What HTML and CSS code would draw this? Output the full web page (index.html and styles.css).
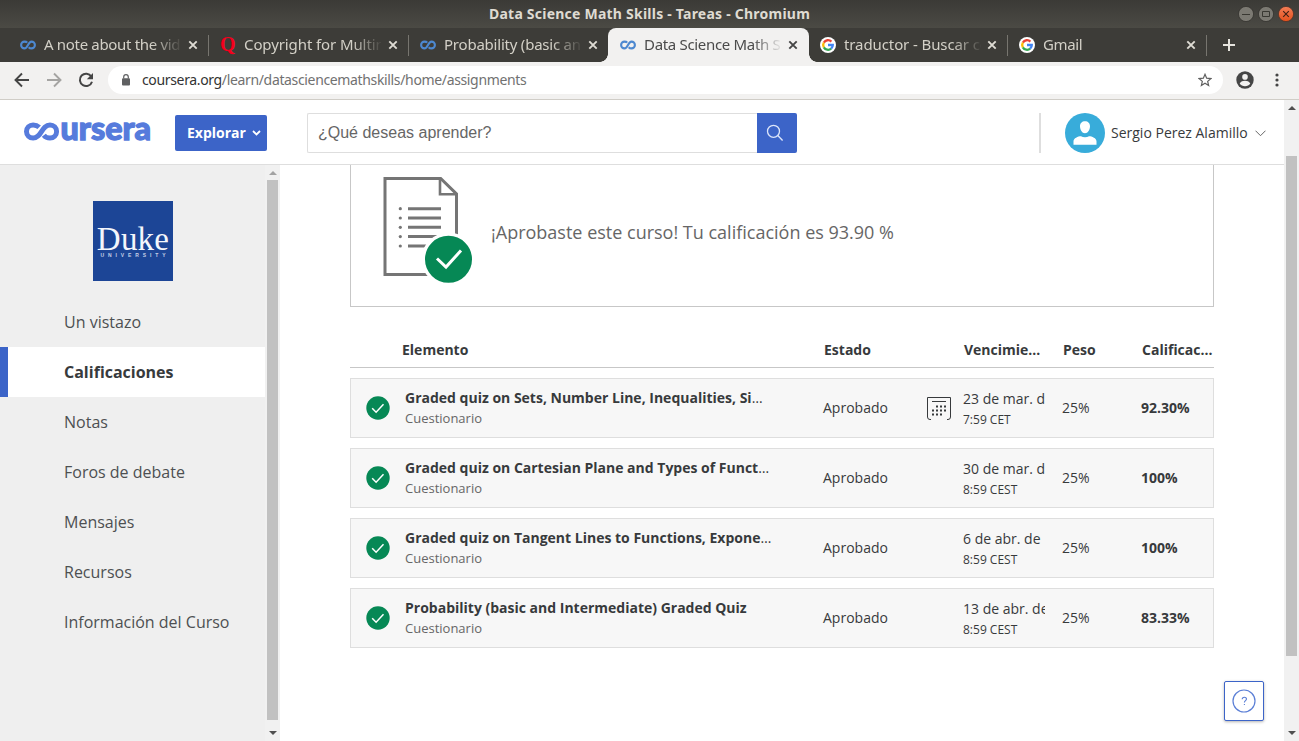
FILE: index.html
```html
<!DOCTYPE html>
<html lang="es">
<head>
<meta charset="utf-8">
<title>Data Science Math Skills - Tareas</title>
<link rel="stylesheet" href="styles.css">
</head>
<body>
<svg class="defs" aria-hidden="true">
  <symbol id="infinity" viewBox="0 0 16 16"><path d="M7.200 5.700C6.400 4.700 5.700 4.600 4.500 4.600a3.200 3.200 0 0 0 0 6.800C8 11.400 8 4.600 11.500 4.600a3.200 3.200 0 0 1 0 6.800C10.300 11.400 9.600 11.200 8.700 10.200" fill="none" stroke="#4d88d0" stroke-width="2.100"/></symbol>
  <symbol id="close" viewBox="0 0 10 10"><path d="M1.300 1.300l7.400 7.400M8.700 1.300L1.300 8.700" fill="none" stroke="currentColor" stroke-width="1.900"/></symbol>
  <symbol id="google" viewBox="0 0 16 16"><circle cx="8" cy="8" r="8" fill="#fff"/><g fill="none" stroke-width="2.300"><path d="M11.400 4.600A4.800 4.800 0 0 0 3.850 5.600" stroke="#ea4335"/><path d="M3.850 5.600a4.800 4.800 0 0 0 0 4.800" stroke="#fbbc05"/><path d="M3.850 10.400a4.800 4.800 0 0 0 7.300 1.200" stroke="#34a853"/><path d="M11.150 11.600A4.800 4.800 0 0 0 12.800 8H8" stroke="#4285f4"/></g></symbol>
  <symbol id="check" viewBox="0 0 24 24"><circle cx="12" cy="12" r="11.700" fill="#068855"/><path d="M6.200 12.200l3.900 4 7.400-8" fill="none" stroke="#fff" stroke-width="1.500"/></symbol>
</svg>

<div class="titlebar">
  <span class="window-title">Data Science Math Skills - Tareas - Chromium</span>
  <div class="window-buttons">
    <svg width="16" height="16" viewBox="0 0 16 16"><circle cx="8" cy="8" r="7.600" fill="#7b7972" stroke="#33322e" stroke-width=".8"/><path d="M4 8.500h8" stroke="#393832"/></svg>
    <svg width="16" height="16" viewBox="0 0 16 16"><circle cx="8" cy="8" r="7.600" fill="#7b7972" stroke="#33322e" stroke-width=".8"/><path d="M4.500 5.500h7v5h-7z" fill="none" stroke="#393832"/></svg>
    <svg width="16" height="16" viewBox="0 0 16 16"><defs><linearGradient id="orange" x2="0" y2="1"><stop stop-color="#f37e57"/><stop offset="1" stop-color="#e2501c"/></linearGradient></defs><circle cx="8" cy="8" r="7.600" fill="url(#orange)" stroke="#4d3229" stroke-width=".8"/><path d="M5.200 5.200l5.600 5.600m0-5.600l-5.600 5.600" stroke="#3e2015" stroke-width="1.100"/></svg>
  </div>
</div>

<div class="tabs">
  <div class="tab"><svg class="favicon"><use href="#infinity"/></svg><span class="tab-text t1">A note about the vid</span><svg class="close"><use href="#close"/></svg></div>
  <div class="tab"><span class="favicon quora">Q</span><span class="tab-text t2">Copyright for Multin</span><svg class="close"><use href="#close"/></svg></div>
  <div class="tab before-active"><svg class="favicon"><use href="#infinity"/></svg><span class="tab-text t3">Probability (basic an</span><svg class="close"><use href="#close"/></svg></div>
  <div class="tab active"><svg class="favicon"><use href="#infinity"/></svg><span class="tab-text t4">Data Science Math S</span><svg class="close"><use href="#close"/></svg></div>
  <div class="tab narrow"><svg class="favicon"><use href="#google"/></svg><span class="tab-text t5">traductor - Buscar co</span><svg class="close"><use href="#close"/></svg></div>
  <div class="tab narrow"><svg class="favicon"><use href="#google"/></svg><span class="tab-text t6">Gmail</span><svg class="close"><use href="#close"/></svg></div>
  <svg class="new-tab" viewBox="0 0 12 12"><path d="M6 0v12M0 6h12" stroke="#e6e4de" stroke-width="2"/></svg>
</div>

<div class="toolbar">
  <svg class="nav-icon" viewBox="0 0 16 16"><path d="M15 8H2M8 1.500L1.500 8 8 14.500" fill="none" stroke="#454545" stroke-width="1.900"/></svg>
  <svg class="nav-icon" viewBox="0 0 16 16"><path d="M1 8h13M8 1.500L14.500 8 8 14.500" fill="none" stroke="#a5a4a2" stroke-width="1.900"/></svg>
  <svg class="nav-icon" viewBox="0 0 16 16"><path d="M13.300 4.500A6.200 6.200 0 1 0 14 9.700" fill="none" stroke="#454545" stroke-width="2"/><path d="M15 1v6.300H8.800z" fill="#454545"/></svg>
  <div class="address">
    <svg class="lock" viewBox="0 0 10 12"><rect x="1" y="4.200" width="8" height="7.300" rx="1" fill="#5f6062"/><path d="M2.700 4.500V3a2.300 2.300 0 0 1 4.600 0v1.500" fill="none" stroke="#5f6062" stroke-width="1.200"/></svg>
    <span class="url"><b>coursera.org</b>/learn/datasciencemathskills/home/assignments</span>
    <svg class="star" viewBox="0 0 14 14"><path d="M7 1.300l1.650 3.900 4.250.36-3.220 2.800.96 4.130L7 10.300l-3.640 2.190.96-4.130L1.100 5.560l4.250-.36z" fill="none" stroke="#606060" stroke-width="1.200"/></svg>
  </div>
  <svg class="account" viewBox="0 0 18 18"><circle cx="9" cy="9" r="8.700" fill="#454545"/><circle cx="9" cy="5.900" r="2.800" fill="#f2f1f0"/><path d="M3.700 12.500c1-2 3.300-2.700 5.300-2.700s4.300.7 5.300 2.700C13.100 14.200 11.200 15.200 9 15.200s-4.100-1-5.300-2.700z" fill="#f2f1f0"/></svg>
  <svg class="kebab" viewBox="0 0 4 14"><g fill="#454545"><circle cx="2" cy="2" r="1.600"/><circle cx="2" cy="7" r="1.600"/><circle cx="2" cy="12" r="1.600"/></g></svg>
</div>

<div class="page">
  <div class="view">
    <header class="header">
      <svg class="logo" viewBox="0 0 128 22"><path d="M15.200 5.200C13.500 3.600 11.500 2.900 9.100 2.900a6.600 6.600 0 0 0 0 13.200C17.500 16.100 17.500 2.900 26 2.900a6.600 6.600 0 0 1 0 13.200c-2.700 0-4.700-.9-6.200-2.800" fill="none" stroke="#567bdc" stroke-width="5"/><text x="36.500" y="18.400" textLength="90.500" lengthAdjust="spacingAndGlyphs" class="logo-text">ursera</text></svg>
      <button class="explore">Explorar<svg viewBox="0 0 9 6"><path d="M1 1l3.500 3.500L8 1" fill="none" stroke="#fff" stroke-width="1.800"/></svg></button>
      <div class="search">
        <span class="search-input">¿Qué deseas aprender?</span>
        <span class="search-button"><svg viewBox="0 0 18 18"><circle cx="7.500" cy="7.300" r="6" fill="none" stroke="#dce5fa" stroke-width="1.300"/><path d="M11.800 11.600l4.800 4.800" stroke="#dce5fa" stroke-width="1.400"/></svg></span>
      </div>
      <div class="user">
        <svg class="avatar" viewBox="0 0 40 40"><circle cx="20" cy="20" r="20" fill="#38acda"/><path d="M20 8.300c3 0 5 2 5 5 0 3.500-2.100 7-5 7s-5-3.500-5-7c0-3 2-5 5-5zM8.500 31.700v-3.500c0-3 4.500-5 7.500-5 2.200 1.500 5.800 1.500 8 0 3 0 7.500 2 7.500 5v3.500z" fill="#fff"/></svg>
        <span class="user-name">Sergio Perez Alamillo</span>
        <svg class="user-caret" viewBox="0 0 11 7"><path d="M.5.700l5 5 5-5" fill="none" stroke="#666" stroke-width="1"/></svg>
      </div>
    </header>

    <div class="content">
      <aside class="sidebar">
        <div class="menu">
          <div class="duke"><span class="duke-name">Duke</span><span class="duke-sub">UNIVERSITY</span></div>
          <a class="item">Un vistazo</a>
          <a class="item current">Calificaciones</a>
          <a class="item">Notas</a>
          <a class="item">Foros de debate</a>
          <a class="item">Mensajes</a>
          <a class="item">Recursos</a>
          <a class="item">Información del Curso</a>
        </div>
        <div class="scrollbar side"><i class="up dim"></i><i class="thumb"></i><i class="down"></i></div>
      </aside>

      <main class="main">
        <section class="summary">
          <svg class="doc" viewBox="0 0 92 108"><g fill="none" stroke="#757575" stroke-width="3"><path d="M73.500 61V17L57.700 1.500H2v96h50"/><path d="M57 1.500v15.700h16.500" stroke-width="2.600"/><path d="M25 31.700h33M25 41h33M25 50.300h33M25 59.600h33M25 69h33"/></g><g fill="#757575"><circle cx="17.300" cy="31.700" r="1.600"/><circle cx="17.300" cy="41" r="1.600"/><circle cx="17.300" cy="50.300" r="1.600"/><circle cx="17.300" cy="59.600" r="1.600"/><circle cx="17.300" cy="69" r="1.600"/></g><circle cx="65.500" cy="82.300" r="25.200" fill="#068855" stroke="#fff" stroke-width="3.400"/><path d="M54 81.500l9 8.500 15-16.500" fill="none" stroke="#fff" stroke-width="3"/></svg>
          <p class="result">¡Aprobaste este curso! Tu calificación es 93.90 %</p>
        </section>
        <div class="row head"><span></span><span>Elemento</span><span>Estado</span><span></span><span>Vencimie...</span><span>Peso</span><span>Calificac...</span></div>
        <div class="row quiz">
          <svg class="ok"><use href="#check"/></svg><div class="name"><strong>Graded quiz on Sets, Number Line, Inequalities, Si<i>…</i></strong><small>Cuestionario</small></div><span class="value">Aprobado</span>
          <svg class="calendar" viewBox="0 0 24 24"><path d="M4 22.500H3A2.500 2.500 0 0 1 .500 20V.500h23V20a2.500 2.500 0 0 1-2.500 2.500h-1M5 4.500h14" fill="none" stroke="#373a3c"/><path d="M9 9.500h11M5 13.500h15M5 17.500h11" fill="none" stroke="#373a3c" stroke-width="2" stroke-dasharray="2 2"/></svg>
          <div class="due"><span>23 de mar. de</span><small>7:59 CET</small></div><span class="value">25%</span><b class="value">92.30%</b>
        </div>
        <div class="row quiz">
          <svg class="ok"><use href="#check"/></svg><div class="name"><strong>Graded quiz on Cartesian Plane and Types of Funct<i>…</i></strong><small>Cuestionario</small></div><span class="value">Aprobado</span><span></span>
          <div class="due"><span>30 de mar. de</span><small>8:59 CEST</small></div><span class="value">25%</span><b class="value">100%</b>
        </div>
        <div class="row quiz">
          <svg class="ok"><use href="#check"/></svg><div class="name"><strong>Graded quiz on Tangent Lines to Functions, Expone<i>…</i></strong><small>Cuestionario</small></div><span class="value">Aprobado</span><span></span>
          <div class="due"><span>6 de abr. de</span><small>8:59 CEST</small></div><span class="value">25%</span><b class="value">100%</b>
        </div>
        <div class="row quiz">
          <svg class="ok"><use href="#check"/></svg><div class="name"><strong>Probability (basic and Intermediate) Graded Quiz</strong><small>Cuestionario</small></div><span class="value">Aprobado</span><span></span>
          <div class="due"><span>13 de abr. de</span><small>8:59 CEST</small></div><span class="value">25%</span><b class="value">83.33%</b>
        </div>
        <button class="help"><svg viewBox="0 0 24 24"><circle cx="12" cy="12" r="11" fill="none" stroke="#5b7fd6" stroke-width="1.200"/><path d="M10.200 10.300c0-2.600 4.300-2.600 4.300-.3 0 1.600-2.100 1.700-2.100 3.500M12.400 14.900v1.200" fill="none" stroke="#5b7fd6" stroke-width="1.100"/></svg></button>
      </main>
    </div>
  </div>
  <div class="scrollbar outer"><i class="up"></i><i class="thumb"></i><i class="down"></i></div>
</div>
</body>
</html>
```
FILE: styles.css
```css
* { box-sizing: border-box; }
body { margin: 0; width: 1299px; height: 741px; overflow: hidden; display: flex; flex-direction: column; font-family: "Open Sans", "Noto Sans", sans-serif; font-size: 14px; color: #373a3c; background: #fff; }
svg { display: block; flex: none; }
.defs { position: absolute; width: 0; height: 0; }
i { font-style: normal; }

.titlebar { height: 28px; flex: none; display: grid; grid-template-columns: 1fr auto 1fr; align-items: center; background: linear-gradient(#3b3a36, #4b4a44); color: #dfdbd2; }
.window-title { grid-column: 2; font: 700 14px/28px "Noto Sans", sans-serif; letter-spacing: .23px; white-space: nowrap; }
.window-buttons { display: flex; gap: 4px; justify-content: flex-end; padding-right: 5px; }

.tabs { height: 34px; flex: none; display: flex; padding-left: 8px; background: #3d3c38; color: #d3d0c7; }
.tab { position: relative; width: 200px; padding: 0 10px 0 12px; display: flex; align-items: center; font: 15px/34px "Noto Sans", sans-serif; }
.tab.narrow { width: 199px; left: -1px; }
.tab::after { content: ""; position: absolute; right: -1px; top: 7px; width: 1px; height: 21px; background: #77756f; }
.tab.active { width: 201px; padding-right: 11px; background: #f2f1f0; color: #4b4b4b; border-radius: 8px 8px 0 0; }
.tab.active::before { content: ""; position: absolute; left: -8px; bottom: 0; width: 8px; height: 8px; background: radial-gradient(circle at 0 0, #3d3c38 7.500px, #f2f1f0 8px); }
.tab.active::after { right: -8px; top: auto; bottom: 0; width: 8px; height: 8px; background: radial-gradient(circle at 100% 0, #3d3c38 7.500px, #f2f1f0 8px); }
.before-active::after { display: none; }
.favicon { width: 16px; height: 16px; flex: none; }
.quora { font: 700 20px/14px "Liberation Serif", serif; color: #f5001d; }
.tab-text { width: 137px; flex: none; margin: -2px 7px 0 8px; overflow: hidden; white-space: nowrap; letter-spacing: -.32px; -webkit-mask-image: linear-gradient(90deg, #000 108px, transparent 139px); mask-image: linear-gradient(90deg, #000 108px, transparent 139px); }
.narrow .tab-text { margin-right: 6px; }
.t2, .t5 { letter-spacing: -.1px; }
.t3 { letter-spacing: -.22px; }
.t6 { letter-spacing: -.35px; }
.close { width: 10px; height: 10px; color: #dfdcd4; }
.new-tab { width: 12px; height: 12px; margin: 11px 0 0 16px; }
.active .close { color: #454545; }

.toolbar { height: 38px; flex: none; display: flex; align-items: center; background: #f2f1f0; border-bottom: 1px solid #d0cdc7; padding: 0 19px 1px 14px; }
.nav-icon { width: 16px; height: 16px; margin-right: 16px; }
.address { width: 1115px; flex: none; height: 28px; margin-left: -2px; padding: 0 11px 0 13px; display: flex; align-items: center; background: #fff; border-radius: 14px; }
.lock { width: 10px; height: 12px; margin-right: 11px; }
.url { flex: 1; font: 14px/28px "Noto Sans", sans-serif; letter-spacing: -.35px; color: #717171; }
.url b { font-weight: 400; color: #333; }
.star { width: 14px; height: 14px; }
.account { width: 18px; height: 18px; margin-left: 13px; }
.kebab { width: 4px; height: 14px; margin-left: 21px; }

.page { flex: 1; min-height: 0; display: flex; }
.view { width: 1284px; display: flex; flex-direction: column; }
.header { height: 65px; flex: none; display: flex; align-items: center; border-bottom: 1px solid #dedede; padding: 1px 18px 0 24px; }
.logo { width: 128px; height: 22px; overflow: visible; }
.logo-text { font: 900 33px Lato, sans-serif; fill: #567bdc; stroke: #567bdc; stroke-width: 1.300px; }
.explore { width: 92px; height: 36px; margin-left: 23px; padding: 0 0 0 12px; border: 0; border-radius: 2px; background: #3c64c8; color: #fff; display: flex; align-items: center; font: 700 14px "Open Sans", sans-serif; }
.explore svg { width: 9px; height: 6px; margin-left: 6px; }
.search { display: flex; margin-left: 40px; }
.search-input { width: 450px; height: 40px; border: 1px solid #dedede; border-right: 0; border-radius: 2px 0 0 2px; padding-left: 10px; font: 16px/37px "Liberation Sans", sans-serif; color: #666; }
.search-button { width: 40px; height: 40px; background: #3c64c8; border-radius: 0 2px 2px 0; padding: 11px 0 0 9px; }
.search-button svg { width: 18px; height: 18px; }
.user { margin-left: auto; height: 40px; border-left: 2px solid #dedede; padding-left: 24px; display: flex; align-items: center; }
.avatar { width: 40px; height: 40px; }
.user-name { margin-left: 6px; width: 137px; white-space: nowrap; }
.user-caret { width: 11px; height: 7px; margin: 1px 0 0 7px; }

.content { flex: 1; min-height: 0; display: flex; }
.sidebar { width: 280px; display: flex; background: #efefef; }
.menu { width: 265px; padding-top: 36px; }
.duke { width: 80px; height: 80px; margin: 0 auto 16px 93px; background: #1c4596; color: #f4f6fb; display: flex; flex-direction: column; align-items: center; padding-top: 26px; }
.duke-name { font: 33px/25px "Liberation Serif", serif; letter-spacing: .2px; }
.duke-sub { font: 700 5px/6px "Liberation Sans", sans-serif; letter-spacing: 3.900px; margin: 0 -4px 0 0; color: #c5d0e6; }
.item { display: block; height: 50px; padding-left: 64px; font-size: 16px; line-height: 50px; color: #4d5052; }
.item.current { background: #fff; border-left: 8px solid #3c64c8; padding-left: 56px; font-weight: 700; color: #373a3c; }

.scrollbar { width: 15px; flex: none; background: #f1f1f1; display: flex; flex-direction: column; align-items: center; }
.scrollbar .thumb { width: 11px; background: #c1c1c1; }
.up { border: 4px solid transparent; border-top: 0; border-bottom: 4px solid #505050; }
.up.dim { border-bottom-color: #a3a3a3; }
.down { border: 4px solid transparent; border-bottom: 0; border-top: 4px solid #505050; margin-top: auto; }
.side .up { margin: 6px 0 5px; }
.side .thumb { height: 540px; }
.side .down { margin-bottom: 6px; }
.outer .up { margin: 6px 0 46px; }
.outer .thumb { height: 500px; }
.outer .down { margin-bottom: 6px; }

.main { flex: 1; position: relative; padding: 0 70px; }
.summary { height: 142px; border: 1px solid #c7c7c7; border-top: 0; display: flex; padding: 12px 0 0 32px; }
.doc { width: 92px; height: 108px; }
.result { margin: 0 0 0 16px; font-size: 18px; line-height: 111px; color: #666; white-space: nowrap; }
.row { display: grid; align-items: center; white-space: nowrap; grid-template-columns: 54px 418px 104px 36px 99px 79px 1fr; }
.head { height: 37px; margin-top: 24px; border-bottom: 1px solid #c7c7c7; font-weight: 700; grid-template-columns: 52px 422px 104px 36px 99px 79px 1fr; padding-top: 1px; }
.quiz { height: 60px; margin-top: 10px; background: #f7f7f7; border: 1px solid #dedede; }
.ok { width: 24px; height: 24px; margin-left: 15px; }
.value { line-height: 20px; padding-bottom: 1px; }
.name { display: flex; flex-direction: column; }
.name strong { line-height: 20px; }
.name i { font-weight: 400; }
.name small { font-size: 13px; line-height: 20px; color: #666; }
.calendar { width: 24px; height: 24px; margin-top: 2px; }
.due { display: flex; flex-direction: column; width: 82px; overflow: hidden; margin-top: 3px; }
.due span { line-height: 20px; }
.due small { font-size: 12px; line-height: 20px; margin-top: 1px; }
.help { position: absolute; right: 20px; bottom: 20px; width: 40px; height: 40px; padding: 7px; border: 1px solid #3c64c8; border-radius: 2px; background: #fff; box-shadow: 0 1px 3px rgba(0, 0, 0, .3); }
.help svg { width: 24px; height: 24px; }
```
